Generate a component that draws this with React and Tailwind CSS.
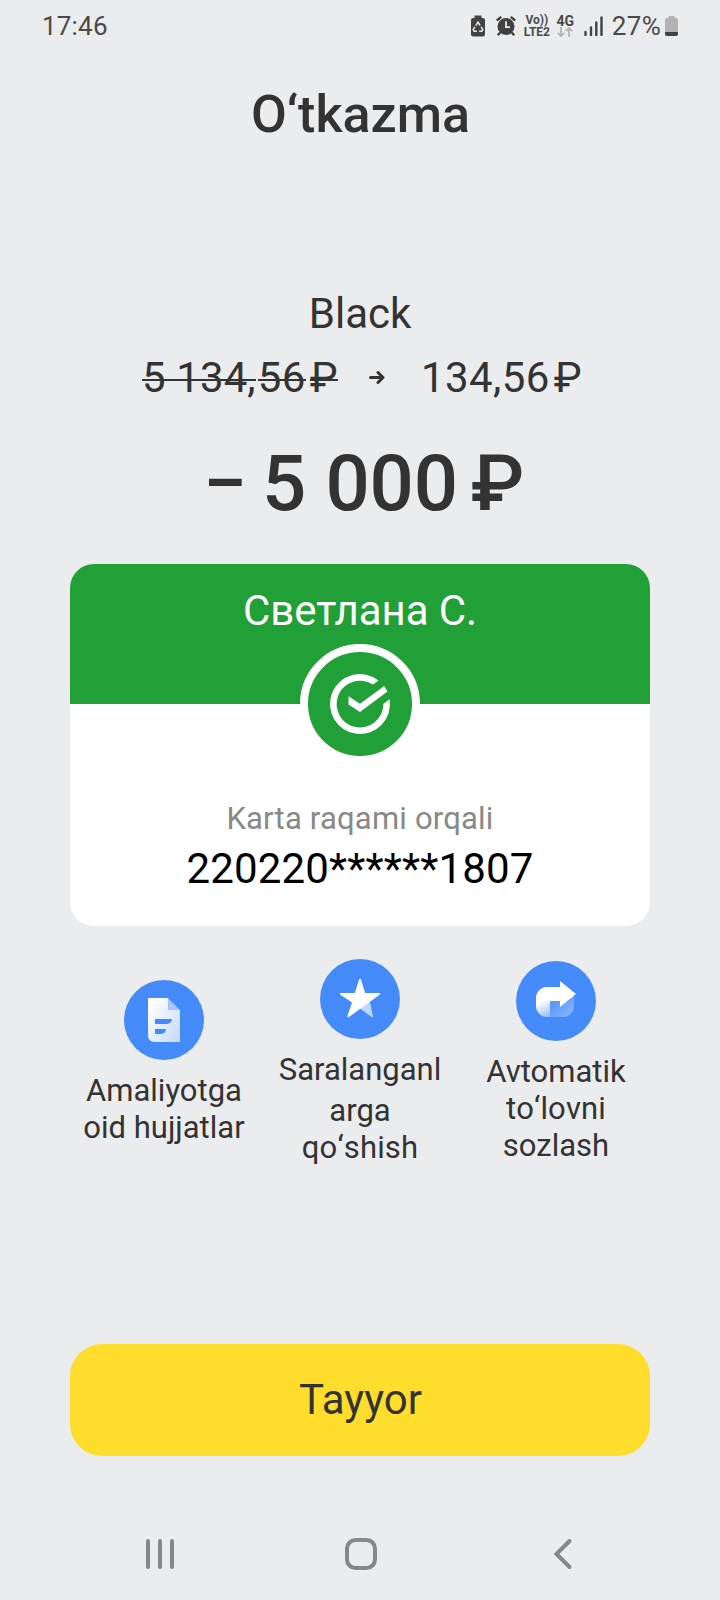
import React from "react";

const StatusBar = () => (
  <div className="flex h-[52px] items-center pr-[42px] pl-[42px] text-[26px] leading-[52px] text-[#4a4a4a]">
    <span className="tracking-[0.2px]">17:46</span>

    <div className="ml-auto flex items-center">
      {/* Battery saver */}
      <svg className="mr-[11px] h-[22px] w-[14px]" viewBox="0 0 14 22">
        <path d="M3.500 0.500h7v2.500H12a2 2 0 0 1 2 2v14.500a2 2 0 0 1-2 2H2a2 2 0 0 1-2-2V5a2 2 0 0 1 2-2h1.500z" fill="#424242" />
        <path d="M4.800 10.600 7 7.200l2.200 3.400M10.200 11.800l1.600 2.900-.9 1.500H8.200M5.800 16.200H3.100l-.9-1.500 1.600-2.900" fill="none" stroke="#ebecee" strokeWidth="1.5" />
      </svg>

      {/* Alarm */}
      <svg className="mr-2 h-[22px] w-[20px]" viewBox="0 0 20 22">
        <circle cx="10" cy="11.5" r="8.5" fill="#424242" />
        <path d="M.8 5.500 5.200 1.800M19.200 5.500l-4.400-3.700M4.200 17.500l-2.400 2.800M15.800 17.500l2.400 2.800" stroke="#424242" strokeWidth="2.400" />
        <path d="M10 6.300v5.900h4" fill="none" stroke="#ebecee" strokeWidth="1.8" />
      </svg>

      {/* VoLTE */}
      <div className="mr-[7px] flex w-[26px] flex-col items-center text-[12px] leading-[12px] font-bold whitespace-nowrap text-[#4a4a4a]">
        <span>Vo))</span>
        <span>LTE2</span>
      </div>

      {/* Mobile data */}
      <div className="mr-[10px] flex w-[17px] flex-col items-center text-[14px] leading-[12px] font-bold">
        <span>4G</span>
        <svg className="h-[10px] w-[16px]" viewBox="0 0 16 10">
          <path d="M4 0v9M.8 5.800 4 9l3.200-3.200M12 10V1M8.800 4.200 12 1l3.200 3.200" fill="none" stroke="#b2b2b3" strokeWidth="1.7" />
        </svg>
      </div>

      {/* Signal */}
      <svg className="mr-[9px] h-[20px] w-[19px]" viewBox="0 0 19 20">
        <path d="M1.500 16v3M7 11.500V19M12.300 6.500V19M17.500 1.500V19" stroke="#424242" strokeWidth="2.400" strokeLinecap="round" />
      </svg>

      <span className="mr-1 tracking-[0.3px]">27%</span>

      <svg className="h-[22px] w-[13px]" viewBox="0 0 13 22">
        <path d="M3.500 1h6v2H11a2 2 0 0 1 2 2v12H0V5a2 2 0 0 1 2-2h1.500z" fill="#b2b2b3" />
        <path d="M0 17h13v2a2 2 0 0 1-2 2H2a2 2 0 0 1-2-2z" fill="#424242" />
      </svg>
    </div>
  </div>
);

const BankLogo = () => (
  <svg className="h-[60px] w-[60px] overflow-visible" viewBox="0 0 60 60">
    <path d="M48.500 6.400A30 30 0 1 0 59.600 25.200L53.400 29.800A23.400 23.400 0 1 1 43 10.600z" fill="#fff" />
    <path d="M18.500 22.200 30 29.700 54.200 12 57.500 17.500 30 38 18.500 30.600z" fill="#fff" />
  </svg>
);

const DocumentIcon = () => (
  <svg className="h-20 w-20" viewBox="0 0 80 80">
    <defs>
      <linearGradient id="doc" x1="0" y1="0" x2="1" y2="1">
        <stop offset="0.1" stopColor="#fff" />
        <stop offset="1" stopColor="#c3d9fc" />
      </linearGradient>
    </defs>
    <circle cx="40" cy="40" r="40" fill="#448bf9" />
    <path d="M24 18h20v12h12v32H30a6 6 0 0 1-6-6z" fill="url(#doc)" />
    <path d="M44 18l12 12H44z" fill="#a2c5fc" />
    <path d="M31 39h17a5 5 0 0 1-5 5H31zM31 49h11a5 5 0 0 1-5 5h-6z" fill="#448bf9" />
  </svg>
);

const StarIcon = () => (
  <svg className="h-20 w-20" viewBox="0 0 80 80">
    <circle cx="40" cy="40" r="40" fill="#448bf9" />
    <path d="M45 44l5-1 3 14.500q-.2 1.200-1.400.500L40 49.500z" fill="#bdd6fd" />
    <path
      d="M39 20.800q1-1.900 2 0L45.200 34H59q2 .3.600 1.700L40 50 28.600 58.200q-1.500.5-1.300-1L32 43.500 20.400 35.700Q19 34.300 21 34H34.800z"
      fill="#fff"
    />
  </svg>
);

const AutoPayIcon = () => (
  <svg className="h-20 w-20" viewBox="0 0 80 80">
    <defs>
      <linearGradient id="payBack" x1="0" y1="0" x2="1" y2="1">
        <stop offset="0.3" stopColor="#5b9afa" />
        <stop offset="1" stopColor="#8fbafc" />
      </linearGradient>
      <linearGradient id="payFront" gradientUnits="userSpaceOnUse" x1="22" y1="40" x2="32" y2="58">
        <stop offset="0.1" stopColor="#fff" />
        <stop offset="1" stopColor="#8ab6fb" />
      </linearGradient>
    </defs>
    <circle cx="40" cy="40" r="40" fill="#448bf9" />
    <path d="M34 40h10l14-6v11a11 11 0 0 1-11 11H34z" fill="url(#payBack)" />
    <path d="M20 39h14v17h-3a11 11 0 0 1-11-11z" fill="url(#payFront)" />
    <path d="M31 26h13v-6l16 13-16 13v-6H20v-3a11 11 0 0 1 11-11z" fill="#fff" />
  </svg>
);

const actions = [
  {
    id: "docs",
    icon: DocumentIcon,
    className: "pt-[21px]",
    lines: ["Amaliyotga", "oid hujjatlar"],
    lineClasses: ["mt-[12px]", ""],
  },
  {
    id: "favorite",
    icon: StarIcon,
    className: "",
    lines: ["Saralanganl", "arga", "qo‘shish"],
    lineClasses: ["mt-[12px]", "mt-1", "tracking-[0.15px] [font-kerning:none]"],
  },
  {
    id: "autopay",
    icon: AutoPayIcon,
    className: "pt-[2px]",
    lines: ["Avtomatik", "to‘lovni", "sozlash"],
    lineClasses: ["mt-[12px]", "tracking-[0.15px] [font-kerning:none]", ""],
  },
];

const NavBar = () => (
  <div className="mt-[82px] flex h-8 items-center text-[#868788]">
    <svg className="ml-[145px] h-8 w-[30px]" viewBox="0 0 30 32">
      <path d="M3 3v26M15 3v26M27 3v26" stroke="currentColor" strokeWidth="4" strokeLinecap="round" />
    </svg>
    <svg className="ml-[170px] h-8 w-8" viewBox="0 0 32 32">
      <rect x="2" y="2" width="28" height="28" rx="8.500" fill="none" stroke="currentColor" strokeWidth="4" />
    </svg>
    <svg className="ml-[176px] h-8 w-5" viewBox="0 0 20 32">
      <path d="M16.500 3 3.500 16l13 13" fill="none" stroke="currentColor" strokeWidth="4" strokeLinecap="round" />
    </svg>
  </div>
);

const Struck = ({ className, children }) => (
  <span
    className={`relative after:absolute after:inset-x-0 after:top-[26px] after:h-[2px] after:bg-[#333333] ${className}`}
  >
    {children}
  </span>
);

const App = () => {
  return (
    <div className="h-[1600px] w-[720px] overflow-hidden bg-[#ebecee] font-[Roboto,sans-serif] text-[#333333]">
      <StatusBar />

      <h1 className="mt-[31px] pl-px text-center text-[52px] leading-[64px] font-medium">O‘tkazma</h1>

      {/* Account and balance change */}
      <div className="mt-[142px] text-center text-[42px] leading-[50px]">Black</div>
      <div className="mt-[14px] flex h-[50px] items-center pl-[142px] text-[42px] leading-[50px] tracking-[0.4px]">
        <Struck className="tracking-[0.1px]">5 134,</Struck>
        <Struck className="ml-[2px]">56</Struck>
        <Struck className="ml-1">₽</Struck>
        <svg className="mr-[36px] ml-[31px] h-[14px] w-4" viewBox="0 0 16 14">
          <path d="M1.500 6.500h12M9 1.500l5 5-5 5" fill="none" stroke="#333" strokeWidth="3" strokeLinecap="round" strokeLinejoin="round" />
        </svg>
        <span>134,56</span>
        <span className="ml-1">₽</span>
      </div>

      <div className="mt-[36px] flex h-[90px] items-center pl-[204px] text-[78px] leading-[90px] font-medium">
        <span className="origin-left scale-x-[0.84]">–</span>
        <span className="ml-[8px] tracking-[-0.2px]">5 000</span>
        <span className="ml-[13px]">₽</span>
      </div>

      {/* Recipient card */}
      <div className="mx-[70px] mt-[35px] h-[362px] overflow-hidden rounded-3xl bg-white text-center">
        <div className="h-[140px] bg-[#22a038] pt-[22px] text-[42px] leading-[50px] tracking-[-0.1px] text-white">
          Светлана С.
        </div>
        <div className="relative mx-auto -mt-[60px] flex h-[120px] w-[120px] items-center justify-center rounded-full border-8 border-white bg-[#22a038]">
          <BankLogo />
        </div>
        <div className="mt-[37px] text-[31px] leading-[36px] tracking-[0.2px] text-[#888888]">Karta raqami orqali</div>
        <div className="mt-[7px] text-[42px] leading-[50px] tracking-[0.15px] text-black">220220******1807</div>
      </div>

      <div className="mt-[33px] flex h-[385px] items-start pl-[66px]">
        {actions.map(({ id, icon: Icon, className, lines, lineClasses }) => (
          <div key={id} className={`flex w-[196px] flex-col items-center ${className}`}>
            <Icon />
            <div className="text-center text-[31px] leading-[37px] whitespace-nowrap">
              {lines.map((line, i) => (
                <div key={line} className={lineClasses[i]}>
                  {line}
                </div>
              ))}
            </div>
          </div>
        ))}
      </div>

      <button className="mx-[70px] flex h-[112px] w-[580px] items-center justify-center rounded-[32px] bg-[#ffdd2d] pb-px pl-px text-[42px]">
        Tayyor
      </button>

      <NavBar />
    </div>
  );
};

export default App;
